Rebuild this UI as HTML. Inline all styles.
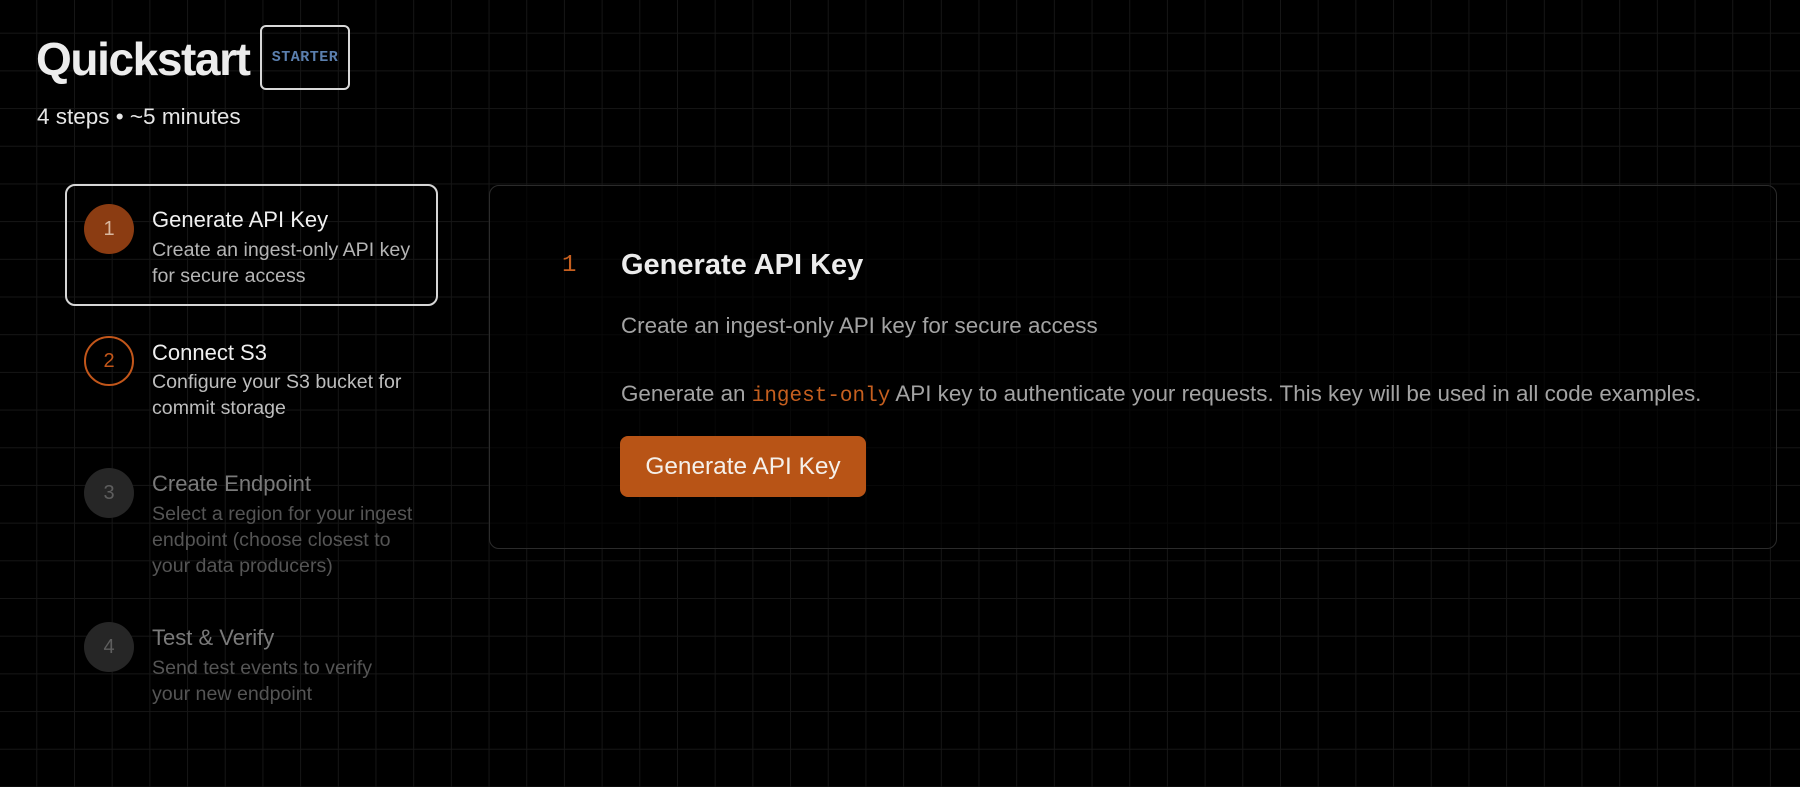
<!DOCTYPE html>
<html><head><meta charset="utf-8"><style>
*{margin:0;padding:0;box-sizing:border-box}
html,body{width:1800px;height:787px;overflow:hidden}
body{background:#000;font-family:"Liberation Sans",sans-serif;position:relative;
background-image:linear-gradient(to right,#161616 1px,transparent 1px),linear-gradient(to bottom,#161616 1px,transparent 1px);
background-size:37.7px 37.7px;background-position:-1.4px 32.7px;}
.abs{position:absolute;white-space:nowrap}
h1{position:absolute;left:36px;top:32px;font-size:46px;font-weight:bold;color:#ececec;letter-spacing:-1.4px}
.badge{position:absolute;left:260px;top:25px;width:90px;height:65px;border:2px solid #d8d8d8;border-radius:6px;color:#5b7fae;font-family:"Liberation Mono",monospace;font-weight:bold;font-size:15px;display:flex;align-items:center;justify-content:center;letter-spacing:0.5px}
.meta{left:37px;top:104px;font-size:22.5px;color:#e6e6e6}
.sel{position:absolute;left:65px;top:184px;width:373px;height:122px;border:2px solid #d6d6d6;border-radius:10px}
.c{position:absolute;width:50px;height:50px;border-radius:50%;display:flex;align-items:center;justify-content:center;font-size:20px}
.t{position:absolute;left:152px;font-size:22px}
.s{position:absolute;left:152px;font-size:19.6px;line-height:26px}
.panel{position:absolute;left:489px;top:185px;width:1288px;height:364px;border:1.5px solid #2b2b2b;border-radius:10px;background:rgba(0,0,0,0.6)}
.btn{position:absolute;left:620px;top:436px;width:246px;height:61px;background:#b85416;border-radius:8px;color:#f5f0ea;font-size:24.4px;display:flex;align-items:center;justify-content:center}
code{font-family:"Liberation Mono",monospace;color:#c65f1f;font-size:21px}
</style></head><body>
<h1>Quickstart</h1>
<div class="badge">STARTER</div>
<div class="abs meta">4 steps • ~5 minutes</div>

<div class="sel"></div>
<div class="c" style="left:84px;top:204px;background:#8b3c12;color:#d9b8a0">1</div>
<div class="t abs" style="top:207px;color:#f0f0f0">Generate API Key</div>
<div class="s" style="top:237px;color:#b5b5b5">Create an ingest-only API key<br>for secure access</div>

<div class="c" style="left:84px;top:336px;border:2px solid #c2561a;color:#c2561a">2</div>
<div class="t abs" style="top:340px;color:#f0f0f0">Connect S3</div>
<div class="s" style="top:369px;color:#bdbdbd">Configure your S3 bucket for<br>commit storage</div>

<div class="c" style="left:84px;top:468px;background:#262626;color:#5e5e5e">3</div>
<div class="t abs" style="top:471px;color:#7a7a7a">Create Endpoint</div>
<div class="s" style="top:501px;color:#555">Select a region for your ingest<br>endpoint (choose closest to<br>your data producers)</div>

<div class="c" style="left:84px;top:622px;background:#262626;color:#5e5e5e">4</div>
<div class="t abs" style="top:625px;color:#7a7a7a">Test &amp; Verify</div>
<div class="s" style="top:655px;color:#555">Send test events to verify<br>your new endpoint</div>

<div class="panel"></div>
<div class="abs" style="left:562px;top:252px;font-size:24px;color:#c65f1f;font-family:'Liberation Mono',monospace">1</div>
<div class="abs" style="left:621px;top:249px;font-size:29px;font-weight:bold;color:#ececec">Generate API Key</div>
<div class="abs" style="left:621px;top:313px;font-size:22.4px;color:#a3a3a3">Create an ingest-only API key for secure access</div>
<div class="abs" style="left:621px;top:381px;font-size:22.4px;color:#a3a3a3">Generate an <code>ingest-only</code> API key to authenticate your requests. This key will be used in all code examples.</div>
<div class="btn">Generate API Key</div>
</body></html>
